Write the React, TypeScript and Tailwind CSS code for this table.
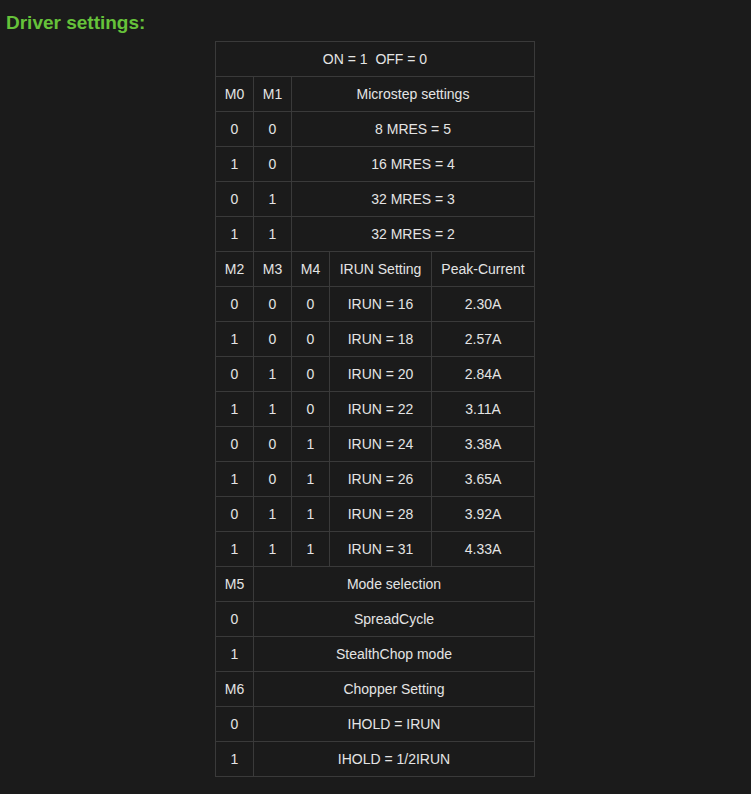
const cell = "border border-[#3a3a3a] h-[35px] p-0 text-center align-middle";

type Row = (string | [string, number])[];

const rows: Row[] = [
  [["ON = 1  OFF = 0", 5]],
  ["M0", "M1", ["Microstep settings", 3]],
  ["0", "0", ["8 MRES = 5", 3]],
  ["1", "0", ["16 MRES = 4", 3]],
  ["0", "1", ["32 MRES = 3", 3]],
  ["1", "1", ["32 MRES = 2", 3]],
  ["M2", "M3", "M4", "IRUN Setting", "Peak-Current"],
  ["0", "0", "0", "IRUN = 16", "2.30A"],
  ["1", "0", "0", "IRUN = 18", "2.57A"],
  ["0", "1", "0", "IRUN = 20", "2.84A"],
  ["1", "1", "0", "IRUN = 22", "3.11A"],
  ["0", "0", "1", "IRUN = 24", "3.38A"],
  ["1", "0", "1", "IRUN = 26", "3.65A"],
  ["0", "1", "1", "IRUN = 28", "3.92A"],
  ["1", "1", "1", "IRUN = 31", "4.33A"],
  ["M5", ["Mode selection", 4]],
  ["0", ["SpreadCycle", 4]],
  ["1", ["StealthChop mode", 4]],
  ["M6", ["Chopper Setting", 4]],
  ["0", ["IHOLD = IRUN", 4]],
  ["1", ["IHOLD = 1/2IRUN", 4]],
];

export default function App() {
  return (
    <div className="min-h-[794px] bg-[#1b1b1b] text-[#e4e4e4] font-['Liberation_Sans',Arial,sans-serif] pt-[12px]">
      <h2 className="text-[19px] font-bold text-[#66c23a] leading-[22px] pl-[6px]">Driver settings:</h2>
      <table className="ml-[215px] mt-[7px] border-collapse text-[14px] table-fixed w-[320px]">
        <colgroup>
          <col className="w-[38px]" />
          <col className="w-[38px]" />
          <col className="w-[38px]" />
          <col className="w-[102px]" />
          <col />
        </colgroup>
        <tbody>
          {rows.map((r, i) => (
            <tr key={i}>
              {r.map((c, j) =>
                Array.isArray(c) ? (
                  <td key={j} colSpan={c[1]} className={cell + " whitespace-pre"}>{c[0]}</td>
                ) : (
                  <td key={j} className={cell}>{c}</td>
                )
              )}
            </tr>
          ))}
        </tbody>
      </table>
    </div>
  );
}
